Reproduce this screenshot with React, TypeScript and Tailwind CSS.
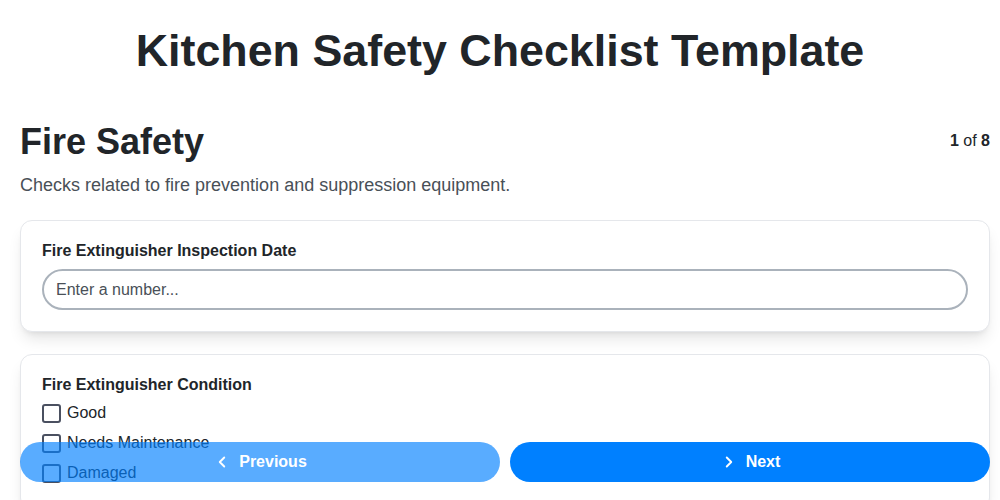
import { ChevronLeft, ChevronRight } from "lucide-react";

const conditionOptions = ["Good", "Needs Maintenance", "Damaged"];

function App() {
    return (
        <div className="h-screen overflow-hidden bg-white pt-[24px] text-[#212529] font-['Liberation_Sans',Arial,sans-serif]">
            <h1 className="text-center text-[44.8px] font-bold leading-[1.2]">
                Kitchen Safety Checklist Template
            </h1>

            <div className="pl-5 pr-[10px]">
                <div className="mt-[42px] flex items-center justify-between">
                    <h2 className="text-4xl font-bold leading-[1.2]">Fire Safety</h2>
                    <span className="text-base">
                        <b>1</b> of <b>8</b>
                    </span>
                </div>
                <p className="mt-[9px] text-lg leading-[1.5] text-[#495057]">
                    Checks related to fire prevention and suppression equipment.
                </p>

                <div className="mt-[21px] flex flex-col gap-[22px]">
                    {/* inspection date */}
                    <div className="rounded-xl border border-[#e5e7eb] bg-white px-[21px] pt-5 pb-[21px] shadow-lg">
                        <label className="block text-base font-bold leading-[1.2]">
                            Fire Extinguisher Inspection Date
                        </label>
                        <input
                            type="text"
                            placeholder="Enter a number..."
                            className="mt-[9px] h-[41px] w-full rounded-full border-2 border-[#aab2bb] px-3 text-base outline-none placeholder:text-[#495057]"
                        />
                    </div>

                    {/* condition */}
                    <div className="rounded-xl border border-[#e5e7eb] bg-white px-[21px] pt-5 pb-[21px] shadow-lg">
                        <label className="block text-base font-bold leading-[1.2]">
                            Fire Extinguisher Condition
                        </label>
                        <div className="mt-[4px] flex flex-col">
                            {conditionOptions.map((opt) => (
                                <label key={opt} className="flex h-[30px] items-center gap-[6px] text-base">
                                    <span className="h-[19px] w-[19px] rounded-[3px] border-2 border-[#4a5060]" />
                                    {opt}
                                </label>
                            ))}
                        </div>
                    </div>
                </div>
            </div>

            <div className="fixed bottom-[18px] left-5 right-[10px] flex gap-[10px]">
                <button className="flex h-10 flex-1 items-center justify-center gap-2 rounded-full bg-[#0080ff] text-base font-bold text-white opacity-65">
                    <ChevronLeft size={18} strokeWidth={2.5} />
                    Previous
                </button>
                <button className="flex h-10 flex-1 items-center justify-center gap-2 rounded-full bg-[#0080ff] text-base font-bold text-white">
                    <ChevronRight size={18} strokeWidth={2.5} />
                    Next
                </button>
            </div>
        </div>
    );
}

export default App;
